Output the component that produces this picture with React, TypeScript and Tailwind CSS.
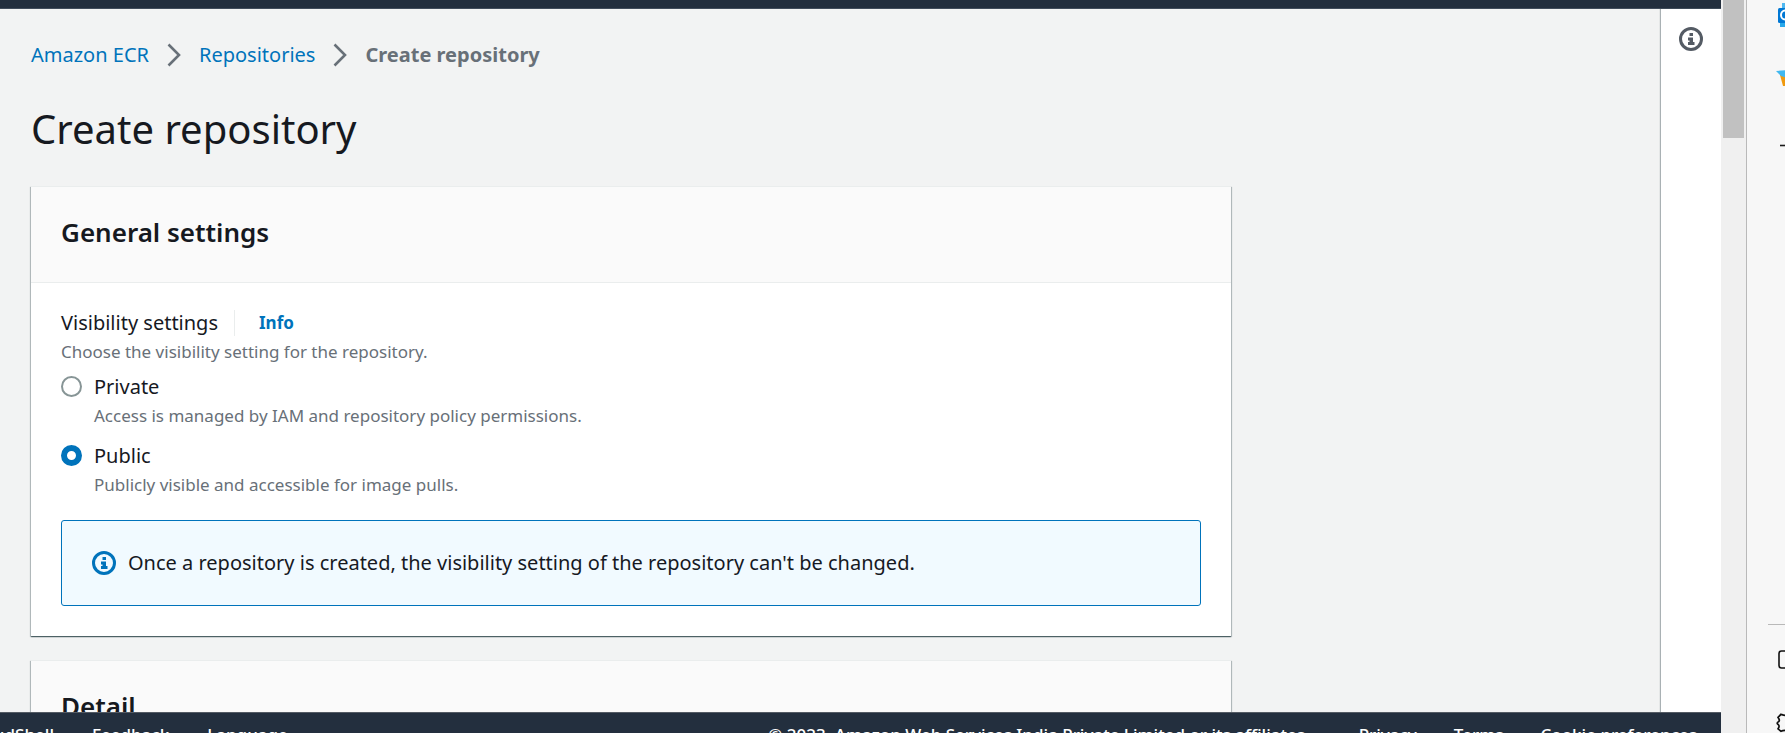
import React from "react";

function InfoIcon({ className }: { className: string }) {
  return (
    <svg viewBox="0 0 24 24" className={className} fill="none" aria-hidden="true">
      <circle cx="12" cy="12" r="10.5" stroke="currentColor" strokeWidth="3" />
      <path fill="currentColor" d="M10.500 6h3.500v3h-3.500zM9 10.500h5V15h1.500v3H9v-3h1.500v-1.500H9z" />
    </svg>
  );
}

function Chevron() {
  return (
    <svg viewBox="0 0 14 24" className="h-6 w-[14px] text-[#687078]" fill="none" aria-hidden="true">
      <path d="M1.500 1.500L12 12L1.500 22.500" stroke="currentColor" strokeWidth="2.600" />
    </svg>
  );
}

function Card({ title, children }: { title: string; children?: React.ReactNode }) {
  return (
    <section className="shrink-0 border-t border-[#eaeded] bg-white shadow-[0_1px_1px_0_rgba(0,28,36,0.5),1px_1px_1px_0_rgba(0,28,36,0.2),-1px_1px_1px_0_rgba(0,28,36,0.2)]">
      <header className="border-b border-[#eaeded] bg-[#fafafa] px-[30px] pb-8 pt-7">
        <h2 className="text-[26px] font-semibold leading-[35px]">{title}</h2>
      </header>
      <div className="px-[30px] pb-[30px] pt-[25px]">{children}</div>
    </section>
  );
}

function Option({ id, label, hint, checked }: { id: string; label: string; hint: string; checked?: boolean }) {
  return (
    <div className="flex gap-3">
      <input
        type="radio"
        id={id}
        name="visibility"
        defaultChecked={checked}
        aria-describedby={id + "-hint"}
        className="mt-1 size-[21px] shrink-0 appearance-none rounded-full border-2 border-[#879596] bg-white checked:border-[6px] checked:border-[#0073bb]"
      />
      <div>
        <label htmlFor={id} className="block text-[20px] leading-[30px]">{label}</label>
        <p id={id + "-hint"} className="text-[17px] leading-[27px] text-[#687078]">{hint}</p>
      </div>
    </div>
  );
}

export default function App() {
  return (
    <div className="flex h-screen overflow-hidden bg-[#f7f7f7] font-['Noto_Sans',sans-serif] text-[#16191f]">
      <div className="flex min-w-0 flex-1 flex-col bg-[#f2f3f3]">
        <div className="h-[9px] shrink-0 border-b border-[#414d5c] bg-[#232f3e]" />
        <div className="flex min-h-0 flex-1">
          <main className="flex min-w-0 flex-1 flex-col overflow-hidden px-[31px] pt-[31px]">
            <nav aria-label="Breadcrumb" className="flex shrink-0 items-center gap-[18px] text-[20px] leading-[30px]">
              <a href="#ecr" className="text-[#0073bb]">Amazon ECR</a>
              <Chevron />
              <a href="#repositories" className="text-[#0073bb]">Repositories</a>
              <Chevron />
              <span className="font-bold text-[#687078]">Create repository</span>
            </nav>
            <h1 className="mt-8 shrink-0 text-[40px] leading-[54px]">Create repository</h1>
            <div className="mt-[30px] flex max-w-[1200px] flex-col gap-6">
              <Card title="General settings">
                <fieldset>
                  <legend className="flex items-center text-[20px] leading-[30px]">
                    Visibility settings
                    <span className="ml-4 h-[26px] w-px bg-[#eaeded]" />
                    <a href="#info" className="ml-6 text-[17px] font-bold text-[#0073bb]">Info</a>
                  </legend>
                  <p className="text-[17px] leading-[27px] text-[#687078]">Choose the visibility setting for the repository.</p>
                  <div className="mt-[7px] flex flex-col gap-3">
                    <Option id="private" label="Private" hint="Access is managed by IAM and repository policy permissions." />
                    <Option id="public" label="Public" hint="Publicly visible and accessible for image pulls." checked />
                  </div>
                </fieldset>
                <div className="mt-[22px] flex items-center gap-3 rounded-[3px] border border-[#0073bb] bg-[#f1faff] px-[30px] py-[27px] text-[20px] leading-[30px]">
                  <InfoIcon className="size-6 shrink-0 text-[#0073bb]" />
                  Once a repository is created, the visibility setting of the repository can't be changed.
                </div>
              </Card>
              <Card title="Detail" />
            </div>
          </main>
          <aside className="z-10 flex w-[60px] shrink-0 flex-col items-center bg-white pt-[18px] shadow-[-1px_0_1px_0_rgba(0,28,36,0.3)]">
            <button type="button" aria-label="Info" className="text-[#545b64]">
              <InfoIcon className="size-6" />
            </button>
          </aside>
        </div>
        <footer className="z-20 flex h-[21px] shrink-0 justify-between overflow-hidden whitespace-nowrap border-t border-[#545b64] bg-[#232f3e] pr-6 text-[17px] font-medium leading-[44px] text-white">
          <div className="flex gap-[38px]">
            <a href="#shell" className="flex w-[54px] justify-end">CloudShell</a>
            <a href="#feedback">Feedback</a>
            <a href="#language">Language</a>
          </div>
          <div className="flex gap-[37px]">
            <span className="mr-3">© 2023, Amazon Web Services India Private Limited or its affiliates.</span>
            <a href="#privacy">Privacy</a>
            <a href="#terms">Terms</a>
            <a href="#cookies">Cookie preferences</a>
          </div>
        </footer>
      </div>
      <div className="w-[25px] shrink-0 bg-[#f0f0f0] px-[2px]">
        <div className="h-[138px] bg-[#c1c1c1]" />
      </div>
      <div className="w-[39px] shrink-0 border-l border-[#b9b9b9] bg-[#f7f7f7]">
        <svg viewBox="0 0 38 733" className="h-[733px] w-[38px]" fill="none" aria-hidden="true">
          <rect x="35" y="3" width="10" height="12" fill="#50b8f0" />
          <rect x="33" y="20" width="10" height="7" fill="#28a8ea" />
          <rect x="31" y="8" width="16" height="15" rx="1.500" fill="#0078d4" />
          <ellipse cx="38" cy="15" rx="4" ry="4.500" stroke="#fff" strokeWidth="2" />
          <path d="M33 75h8v11h-5z" fill="#f09a0f" />
          <path d="M29 71l12-1v8l-7-2z" fill="#40b8f0" />
          <path d="M33 145.500h8" stroke="#1b1b1b" strokeWidth="1.600" />
          <path d="M21 624.500h20" stroke="#b9b9b9" />
          <rect x="32" y="651" width="18" height="17" rx="2.500" stroke="#111" strokeWidth="1.600" />
          <path d="M39 715.500c-2 0-3-.5-5-1.200l-3 3c1 2 2.500 3 .5 4.500c-2 1-1.500 2 0 3c1.500 1.500 0 3-.5 4l3 2.500c2-1 3-1 5-1" stroke="#111" strokeWidth="1.700" />
        </svg>
      </div>
    </div>
  );
}
